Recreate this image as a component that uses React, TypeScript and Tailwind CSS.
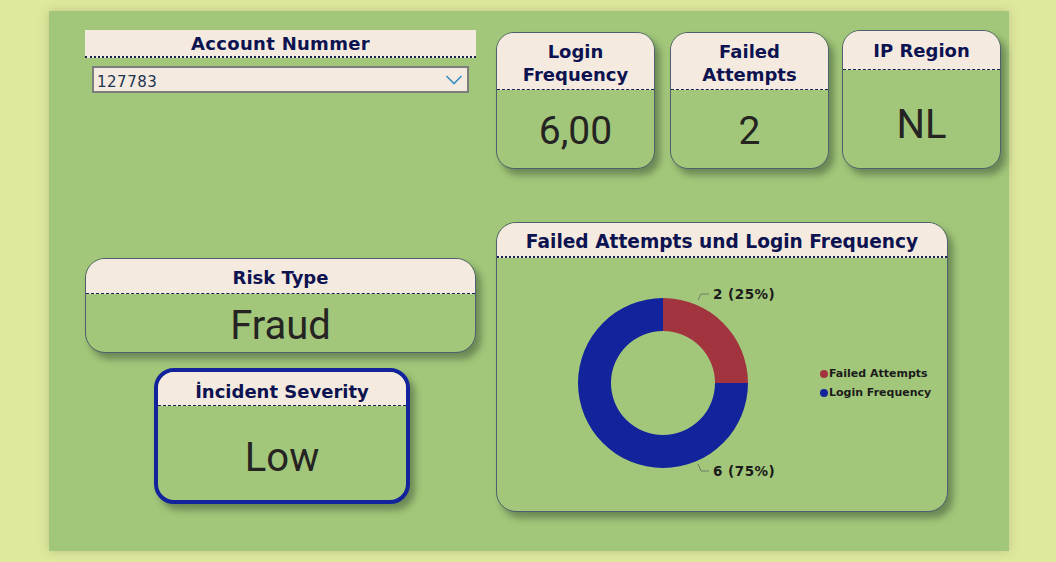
import React from "react";

const titleFont = { fontFamily: '"DejaVu Sans", Verdana, sans-serif' };
const valueFont = { fontFamily: 'Roboto, "DejaVu Sans", sans-serif' };

function Card({
  title,
  value,
  className,
  headerClass,
  valueClass,
}: {
  title: React.ReactNode;
  value: string;
  className: string;
  headerClass: string;
  valueClass?: string;
}) {
  return (
    <div
      className={
        "flex flex-col overflow-hidden bg-[#a2c77a] shadow-[5px_6px_7px_rgba(40,60,40,0.45)] " +
        className
      }
    >
      <div
        className={
          "flex shrink-0 flex-col items-center justify-center border-b border-dashed border-[#1a2250] bg-[#f5eadf] text-center font-bold leading-[23px] text-[#0d1350] " +
          headerClass
        }
        style={titleFont}
      >
        {title}
      </div>
      <div
        className={"flex flex-1 items-center justify-center text-[39px] text-[#252423] " + (valueClass ?? "")}
        style={valueFont}
      >
        {value}
      </div>
    </div>
  );
}

export default function App() {
  return (
    <div className="h-[562px] w-[1056px] overflow-hidden bg-[#dfe99d] pt-[11px] pl-[49px]">
      <div className="flex h-[540px] w-[960px] bg-[#a2c77a] pt-[19px] pl-[36px] shadow-[0_0_10px_rgba(120,130,90,0.35)]">
        {/* left column */}
        <div className="flex w-[391px] flex-col">
          <div
            className="flex h-[28px] items-center justify-center border-b-2 border-dotted border-[#1a2250] bg-[#f5eadf] text-[18px] font-bold tracking-[0.3px] text-[#0d1350]"
            style={titleFont}
          >
            Account Nummer
          </div>
          <div className="mx-[7px] mt-[8px] flex h-[27px] items-center justify-between border-2 border-[#7d7d7d] bg-[#f5eadf] pr-[4px] pl-[3px]">
            <span
              className="pt-[5px] text-[15px] tracking-[0.5px] text-[#1b3552]"
              style={{ fontFamily: '"DejaVu Sans", Verdana, sans-serif' }}
            >
              127783
            </span>
            <svg width="18" height="12" viewBox="0 0 18 12">
              <path d="M1.5 2 L9 9.5 L16.5 2" fill="none" stroke="#3a8fc3" strokeWidth="1.6" />
            </svg>
          </div>

          <Card
            title="Risk Type"
            value="Fraud"
            className="mt-[165px] h-[95px] rounded-[20px] border border-[#4f5f6d]"
            headerClass="h-[35px] text-[18px] pt-[3px]"
            valueClass="pt-[2px] text-[40px]"
          />

          <Card
            title="İncident Severity"
            value="Low"
            className="mt-[15px] ml-[69px] h-[136px] w-[256px] rounded-[20px] border-[4px] border-[#13239c]"
            headerClass="h-[34px] text-[18px] pt-[6px]"
            valueClass="pt-[10px] text-[40px]"
          />
        </div>

        {/* right column */}
        <div className="ml-[20px] flex flex-col">
          <div className="flex items-end">
            <Card
              title={
                <>
                  <span>Login</span>
                  <span>Frequency</span>
                </>
              }
              value="6,00"
              className="h-[137px] w-[159px] rounded-[18px] border border-[#4f5f6d]"
              headerClass="h-[57px] text-[18px] pt-[4px]"
              valueClass="pt-[4px]"
            />
            <Card
              title={
                <>
                  <span>Failed</span>
                  <span>Attempts</span>
                </>
              }
              value="2"
              className="ml-[15px] h-[137px] w-[159px] rounded-[18px] border border-[#4f5f6d]"
              headerClass="h-[57px] text-[18px] pt-[4px]"
              valueClass="pt-[4px]"
            />
            <Card
              title="IP Region"
              value="NL"
              className="ml-[13px] h-[139px] w-[159px] rounded-[18px] border border-[#4f5f6d]"
              headerClass="h-[39px] text-[18px] pt-[1px]"
              valueClass="pt-[12px] text-[40px]"
            />
          </div>

          <div className="mt-[53px] flex h-[290px] w-[452px] flex-col overflow-hidden rounded-[20px] border border-[#4f5f6d] bg-[#a2c77a] shadow-[5px_6px_7px_rgba(40,60,40,0.45)]">
            <div
              className="flex h-[35px] shrink-0 items-center justify-center border-b-2 border-dotted border-[#1a2250] bg-[#f5eadf] pt-[5px] text-[18.6px] font-bold text-[#0d1350]"
              style={titleFont}
            >
              Failed Attempts und Login Frequency
            </div>
            <div className="flex flex-1 items-center">
              <svg width="322" height="252" viewBox="0 0 322 252">
                <path
                  d="M 166 39 A 85 85 0 0 1 251 124 L 218 124 A 52 52 0 0 0 166 72 Z"
                  fill="#a2343f"
                />
                <path
                  d="M 251 124 A 85 85 0 1 1 166 39 L 166 72 A 52 52 0 1 0 218 124 Z"
                  fill="#13239c"
                />
                <path d="M 201 41 L 204 35 L 212 35" fill="none" stroke="#6f7d68" strokeWidth="1" />
                <path d="M 201 205 L 204 212 L 212 212" fill="none" stroke="#6f7d68" strokeWidth="1" />
                <text
                  x="216"
                  y="40"
                  fontSize="13.5"
                  fontWeight="bold"
                  letterSpacing="0.5"
                  fill="#1b1b1b"
                  style={titleFont}
                >
                  2 (25%)
                </text>
                <text
                  x="216"
                  y="217"
                  fontSize="13.5"
                  fontWeight="bold"
                  letterSpacing="0.5"
                  fill="#1b1b1b"
                  style={titleFont}
                >
                  6 (75%)
                </text>
              </svg>
              <div
                className="ml-[1px] flex flex-col gap-[3px] pb-[2px] text-[11px] font-bold text-[#1b1b1b]"
                style={titleFont}
              >
                <div className="flex items-center gap-[1px]">
                  <span className="inline-block h-[8px] w-[8px] rounded-full bg-[#a2343f]" />
                  <span>Failed Attempts</span>
                </div>
                <div className="flex items-center gap-[1px]">
                  <span className="inline-block h-[8px] w-[8px] rounded-full bg-[#13239c]" />
                  <span>Login Frequency</span>
                </div>
              </div>
            </div>
          </div>
        </div>
      </div>
    </div>
  );
}
